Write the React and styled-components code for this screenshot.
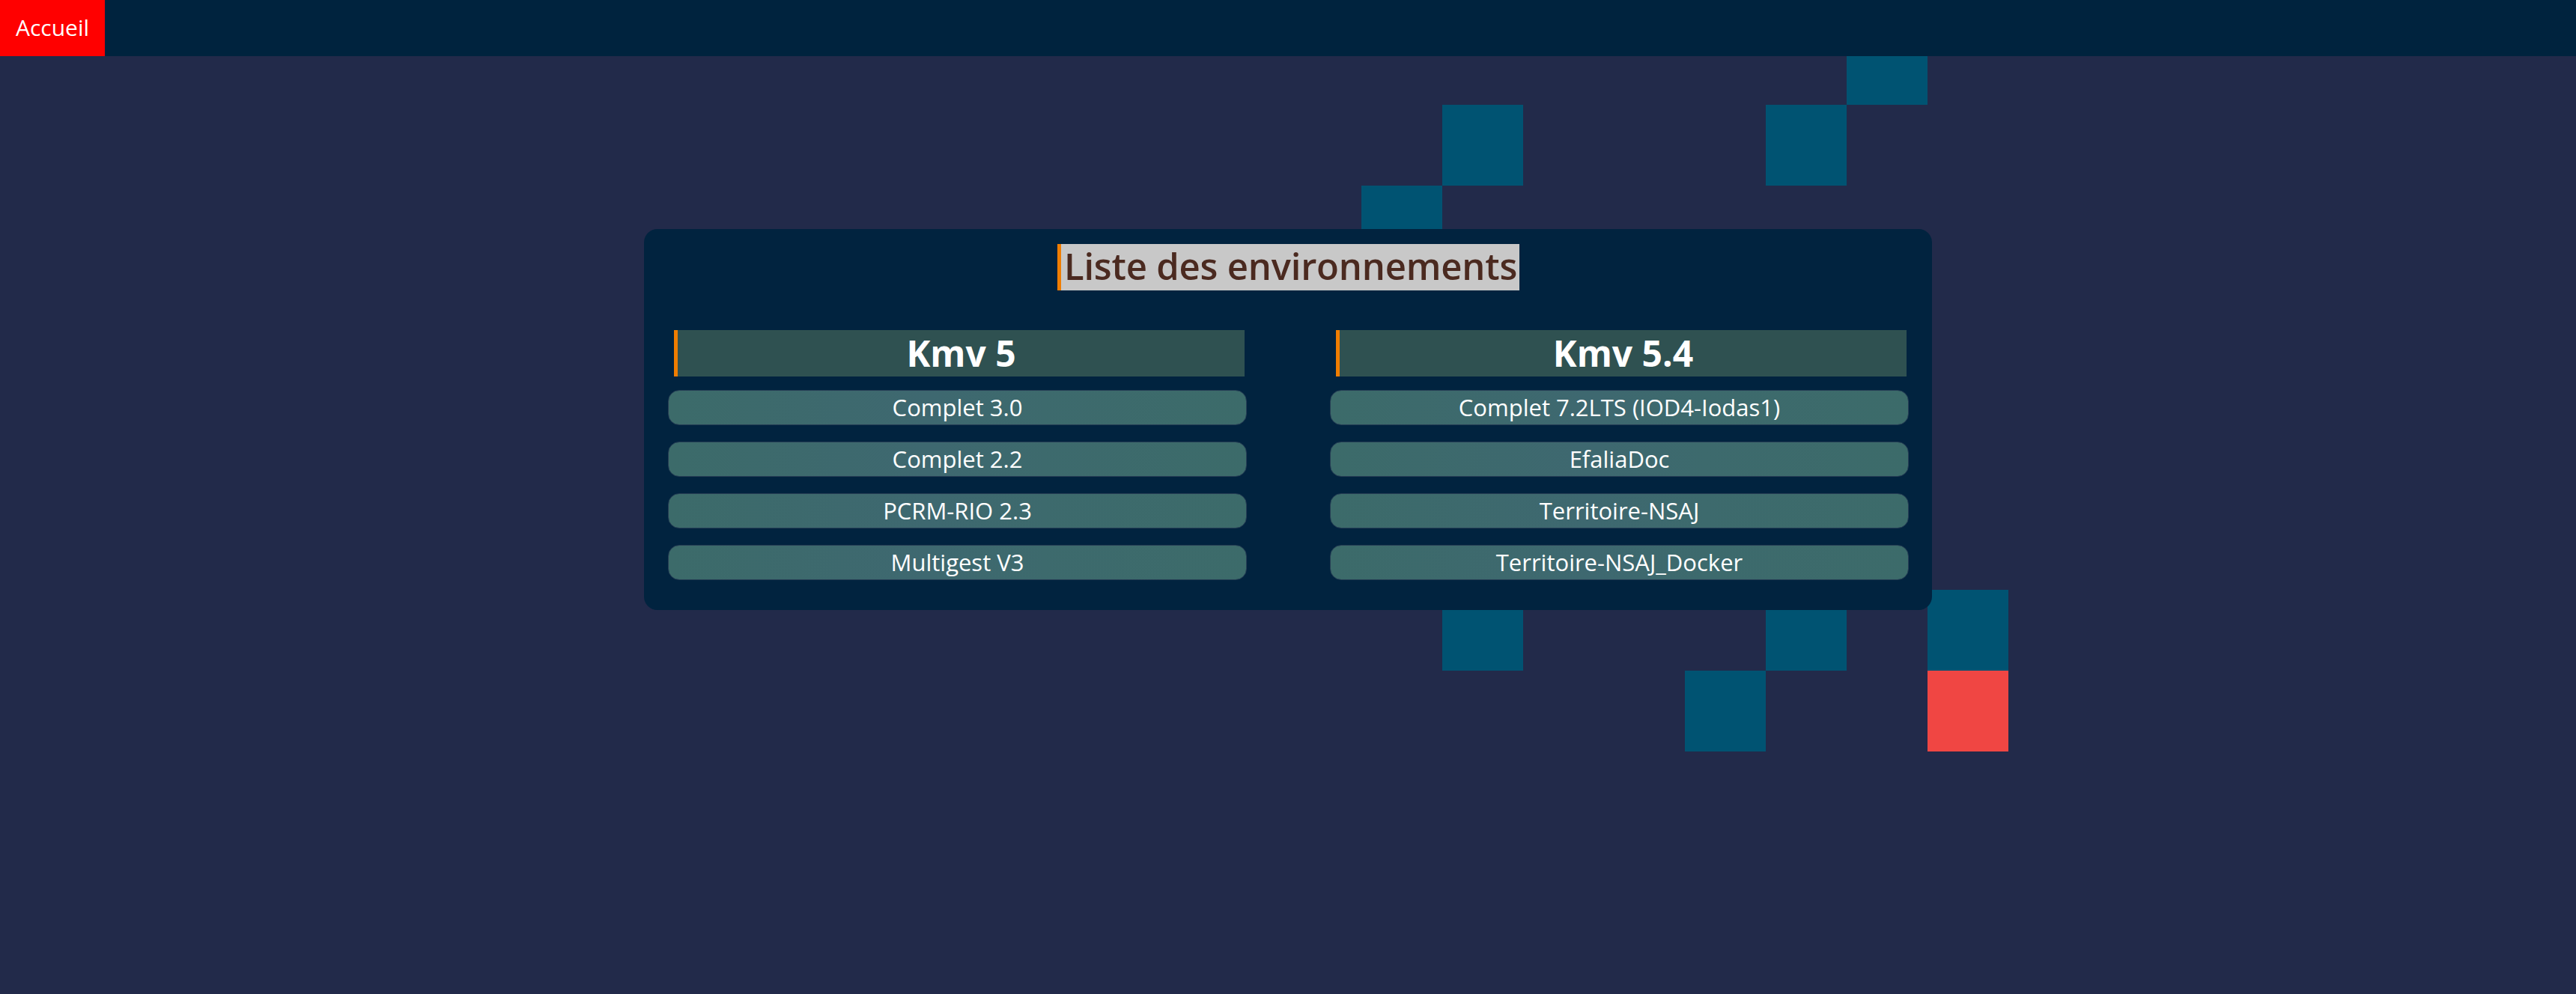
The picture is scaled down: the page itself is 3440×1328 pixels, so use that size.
import React from "react";
import styled, { createGlobalStyle } from "styled-components";

const GlobalStyle = createGlobalStyle`
  html, body {
    margin: 0;
    padding: 0;
    background: #222a4a;
    font-family: "Open Sans", "DejaVu Sans", sans-serif;
  }
  * { box-sizing: border-box; }
`;

const Page = styled.div`
  position: relative;
  height: 100vh;
  overflow: hidden;
  background: #222a4a;
`;

const Decor = styled.div`
  position: absolute;
  inset: 0;
  z-index: 0;
  pointer-events: none;
`;

const Square = styled.span`
  position: absolute;
  left: ${(p) => p.$x}px;
  top: ${(p) => p.$y}px;
  width: 108px;
  height: 108px;
  background: ${(p) => (p.$red ? "#f04643" : "#005372")};
`;

const TopBar = styled.header`
  position: relative;
  z-index: 2;
  display: flex;
  height: 75px;
  background: #00233e;
`;

const HomeLink = styled.a`
  display: flex;
  align-items: center;
  padding: 0 21px 2px 21px;
  background: #ff0000;
  color: #ffffff;
  font-size: 30px;
  text-decoration: none;
`;

const Main = styled.main`
  position: relative;
  z-index: 1;
  display: flex;
  justify-content: center;
  padding-top: 231px;
`;

const Card = styled.section`
  width: 50%;
  background: #01233f;
  border-radius: 18px;
  padding: 20px 31px 40px 32px;
`;

const TitleRow = styled.div`
  display: flex;
  justify-content: center;
`;

const Title = styled.h1`
  margin: 0;
  height: 62px;
  display: flex;
  align-items: center;
  padding: 0 3px 4px 4px;
  background: #c8c8c8;
  border-left: 5px solid #f07d00;
  color: #4b2a20;
  font-size: 49px;
  font-weight: 600;
  letter-spacing: -0.2px;
`;

const Columns = styled.div`
  display: grid;
  grid-template-columns: 1fr 1fr;
  column-gap: 111px;
  margin-top: 53px;
`;

const Column = styled.div`
  display: flex;
  flex-direction: column;
`;

const ColumnHeader = styled.h2`
  margin: 0 3px 0 8px;
  height: 62px;
  display: flex;
  align-items: center;
  justify-content: center;
  background: #2f5151;
  border-left: 5px solid #f07d00;
  color: #ffffff;
  font-size: 48px;
  font-weight: 700;
  padding-bottom: 2px;
`;

const ItemList = styled.ul`
  list-style: none;
  margin: 18px 0 0 0;
  padding: 0;
  display: flex;
  flex-direction: column;
  gap: 22px;
`;

const Item = styled.li`
  height: 47px;
  display: flex;
  align-items: center;
  justify-content: center;
  border-radius: 15px;
  background: linear-gradient(90deg, #3c6b6a 0%, #3e6870 45%, #3d6a6d 65%, #3c6b6a 100%);
  border: 1px solid #263e55;
  color: #ffffff;
  font-size: 31px;
  padding-bottom: 2px;
  cursor: pointer;
`;

const squares = [
  { x: 2466, y: 32 },
  { x: 1926, y: 140 },
  { x: 2358, y: 140 },
  { x: 1818, y: 248 },
  { x: 1926, y: 788 },
  { x: 2358, y: 788 },
  { x: 2574, y: 788 },
  { x: 2250, y: 896 },
  { x: 2574, y: 896, red: true },
];

const groups = [
  {
    name: "Kmv 5",
    items: ["Complet 3.0", "Complet 2.2", "PCRM-RIO 2.3", "Multigest V3"],
  },
  {
    name: "Kmv 5.4",
    items: [
      "Complet 7.2LTS (IOD4-Iodas1)",
      "EfaliaDoc",
      "Territoire-NSAJ",
      "Territoire-NSAJ_Docker",
    ],
  },
];

export default function App() {
  return (
    <>
      <GlobalStyle />
      <Page>
        <Decor>
          {squares.map((s, i) => (
            <Square key={i} $x={s.x} $y={s.y} $red={s.red} />
          ))}
        </Decor>
        <TopBar>
          <HomeLink href="#">Accueil</HomeLink>
        </TopBar>
        <Main>
          <Card>
            <TitleRow>
              <Title>Liste des environnements</Title>
            </TitleRow>
            <Columns>
              {groups.map((g) => (
                <Column key={g.name}>
                  <ColumnHeader>{g.name}</ColumnHeader>
                  <ItemList>
                    {g.items.map((it) => (
                      <Item key={it}>{it}</Item>
                    ))}
                  </ItemList>
                </Column>
              ))}
            </Columns>
          </Card>
        </Main>
      </Page>
    </>
  );
}
